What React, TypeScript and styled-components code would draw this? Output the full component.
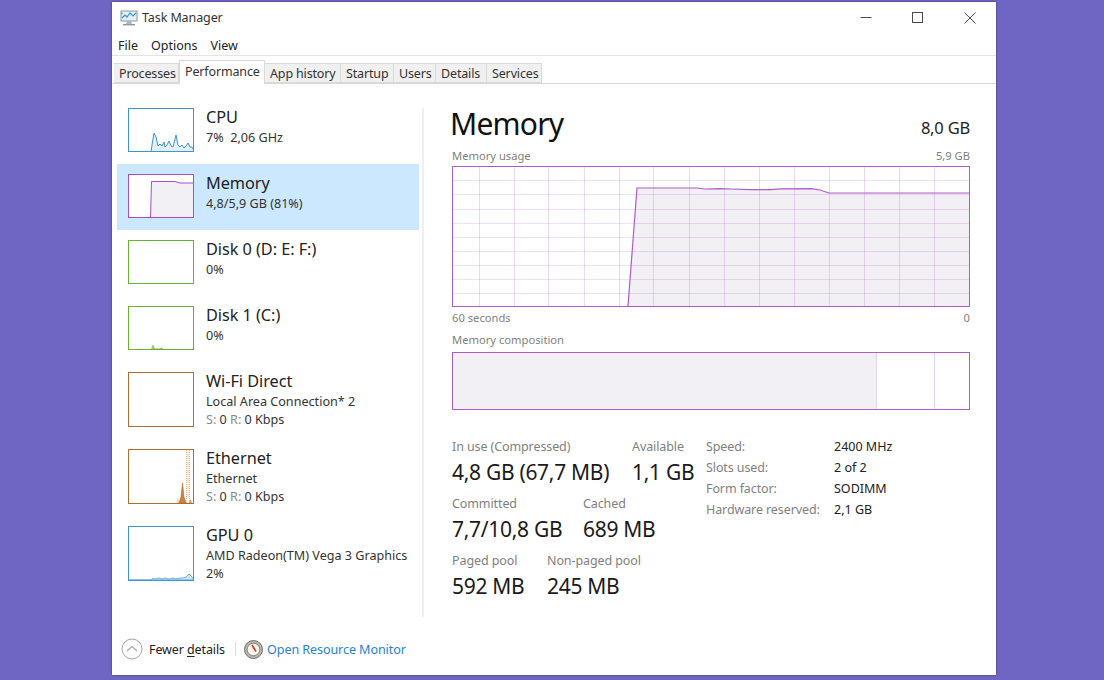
import React from "react";
import styled, { createGlobalStyle } from "styled-components";

const GlobalStyle = createGlobalStyle`
  html, body {
    margin: 0;
    height: 680px;
    overflow: hidden;
    background: #6f66c3;
    font-family: "Noto Sans", "Open Sans", sans-serif;
    color: #1a1a1a;
  }
`;

const TABS = [
  { label: "Processes", width: 65 },
  { label: "Performance", width: 86, active: true },
  { label: "App history", width: 76 },
  { label: "Startup", width: 53 },
  { label: "Users", width: 42 },
  { label: "Details", width: 51 },
  { label: "Services", width: 55 },
];

const BLUE = "#3f94d0";
const PURPLE = "#a84fc8";
const GREEN = "#6bb233";
const BROWN = "#b46c2e";

const CPU_LINE =
  "M22 43 L23 36 L25 24 L27 28 L29 37 L31 35 L33 37 L35 33 L36 38 L38 36 L40 32 L42 37 L44 38 L46 30 L47 26 L49 36 L51 38 L53 36 L55 39 L57 37 L59 34 L61 38 L63 38 L65 42";
const GPU_LINE =
  "M0 53 L22 53 L24 51 L26 52 L30 51 L33 52 L36 51 L40 52 L44 51 L47 52 L51 51 L54 51 L57 50 L60 47 L63 50 L65 53";

const GRID_X = [27, 62, 96, 132, 167, 201, 237, 272, 307, 342, 377, 412, 447, 482];
const GRID_Y = [14, 28, 43, 57, 71, 85, 99, 113, 127];
const USAGE_LINE =
  "M176 140 L185 22 L245 22 L253 23 L268 22.6 L279 23 L298 23.6 L319 23.6 L328 22.8 L359 22.6 L368 24 L377 27 L517 27";

const Thumb = ({ color, height, children }: { color: string; height: number; children?: React.ReactNode }) => (
  <ThumbBox $color={color} $height={height}>
    <svg width="64" height={height - 2} viewBox={`0 0 64 ${height - 2}`}>
      {children}
    </svg>
  </ThumbBox>
);

const DEVICES = [
  {
    name: "CPU",
    lines: ["7%  2,06 GHz"],
    thumb: (
      <Thumb color={BLUE} height={44}>
        <path d={`${CPU_LINE} L65 43 Z`} fill="#e5f1f9" stroke={BLUE} strokeWidth="1" />
      </Thumb>
    ),
  },
  {
    name: "Memory",
    selected: true,
    lines: ["4,8/5,9 GB (81%)"],
    thumb: (
      <Thumb color={PURPLE} height={44}>
        <path d="M21.5 43 L22.5 6.5 L46 6.5 L51 8 L65 8 L65 43 Z" fill="#f2f0f5" stroke={PURPLE} strokeWidth="1" />
      </Thumb>
    ),
  },
  { name: "Disk 0 (D: E: F:)", lines: ["0%"], thumb: <Thumb color={GREEN} height={44} /> },
  {
    name: "Disk 1 (C:)",
    lines: ["0%"],
    thumb: (
      <Thumb color={GREEN} height={44}>
        <path d="M22.5 42 L24 38 L25.5 42 L31 42 L32.5 41 L34 42 Z" fill="#a6d284" stroke={GREEN} strokeWidth="0.5" />
      </Thumb>
    ),
  },
  {
    name: "Wi-Fi Direct",
    tall: true,
    lines: ["Local Area Connection* 2"],
    rate: true,
    thumb: <Thumb color={BROWN} height={55} />,
  },
  {
    name: "Ethernet",
    tall: true,
    lines: ["Ethernet"],
    rate: true,
    thumb: (
      <Thumb color={BROWN} height={55}>
        <path d="M47 53 L49 47 L51 53 Z" fill="#f0d9c3" />
        <path d="M50 53 L52 47 L53.5 33 L55 47 L57 53 Z" fill="#c88443" stroke={BROWN} strokeWidth="0.6" />
        <path d="M58 1 L60 1 L60 48 L58 48 Z" fill="#f7eadd" />
        <path d="M57.5 53 L57.5 0 M60.5 0 L60.5 53" fill="none" stroke="#e3b184" strokeWidth="1" strokeDasharray="1 1" />
        <path d="M60 53 L61.5 49 L63 53 Z" fill="#d69b63" />
      </Thumb>
    ),
  },
  {
    name: "GPU 0",
    tall: true,
    lines: ["AMD Radeon(TM) Vega 3 Graphics", "2%"],
    thumb: (
      <Thumb color={BLUE} height={55}>
        <path d={`${GPU_LINE} Z`} fill="#cfe4f3" stroke={BLUE} strokeWidth="0.7" />
      </Thumb>
    ),
  },
];

const App = () => (
  <Desktop>
    <GlobalStyle />
    <Window>
      <TitleBar>
        <AppTitle>
          <svg width="18" height="17" viewBox="0 0 18 17">
            <rect x="1" y="2" width="16" height="10" fill="#e4eef4" stroke="#8a9aa4" />
            <path d="M2 9 L5 6 L7 8 L10 4 L13 7 L16 4" fill="none" stroke="#3d97c9" strokeWidth="1.2" />
            <path d="M1 5 L2 3 L3 5 Z" fill="#57a846" />
            <path d="M7 12 L11 12 L12 15 L6 15 Z" fill="#aeb9bf" />
            <rect x="3" y="15" width="12" height="1.4" fill="#8a9aa4" />
          </svg>
          <span>Task Manager</span>
        </AppTitle>
        <CaptionButtons>
          <CaptionButton>
            <svg width="12" height="12" viewBox="0 0 12 12">
              <path d="M0.5 5.5 L11.5 5.5" stroke="#4a4a4a" />
            </svg>
          </CaptionButton>
          <CaptionButton>
            <svg width="12" height="12" viewBox="0 0 12 12">
              <rect x="0.5" y="0.5" width="10" height="10" fill="none" stroke="#4a4a4a" />
            </svg>
          </CaptionButton>
          <CaptionButton>
            <svg width="12" height="12" viewBox="0 0 12 12">
              <path d="M0.5 0.5 L11.5 11.5 M11.5 0.5 L0.5 11.5" stroke="#4a4a4a" />
            </svg>
          </CaptionButton>
        </CaptionButtons>
      </TitleBar>
      <MenuBar>
        <MenuItem>File</MenuItem>
        <MenuItem>Options</MenuItem>
        <MenuItem>View</MenuItem>
      </MenuBar>
      <TabStrip>
        {TABS.map((tab) => (
          <Tab key={tab.label} $width={tab.width} $active={tab.active}>
            {tab.label}
          </Tab>
        ))}
      </TabStrip>
      <Content>
        <Sidebar>
          {DEVICES.map((device) => (
            <Device key={device.name} $selected={device.selected} $tall={device.tall}>
              {device.thumb}
              <DeviceText>
                <DeviceName>{device.name}</DeviceName>
                <DeviceLines>
                  {device.lines.map((line) => (
                    <DeviceLine key={line}>{line}</DeviceLine>
                  ))}
                  {device.rate && (
                    <DeviceLine>
                      <Muted>S:</Muted> 0 <Muted>R:</Muted> 0 Kbps
                    </DeviceLine>
                  )}
                </DeviceLines>
              </DeviceText>
            </Device>
          ))}
        </Sidebar>
        <Divider />
        <Panel>
          <PanelHeader>
            <PanelTitle>Memory</PanelTitle>
            <PanelTotal>8,0 GB</PanelTotal>
          </PanelHeader>
          <CaptionRow>
            <span>Memory usage</span>
            <span>5,9 GB</span>
          </CaptionRow>
          <UsageGraph>
            <svg width="516" height="139" viewBox="1 1 516 139">
              <path d="M176 140 L185 22 L245 22 L253 23 L268 22.6 L279 23 L298 23.6 L319 23.6 L328 22.8 L359 22.6 L368 24 L377 27 L517 27 L517 140 Z" fill="#f2f0f5" />
              {GRID_X.map((x) => (
                <path key={x} d={`M${x}.5 1 L${x}.5 140`} stroke="#a84fc8" strokeOpacity="0.22" />
              ))}
              {GRID_Y.map((y) => (
                <path key={y} d={`M1 ${y}.5 L517 ${y}.5`} stroke="#a84fc8" strokeOpacity="0.18" />
              ))}
              <path d={USAGE_LINE} fill="none" stroke="#ad5ccb" strokeWidth="1.2" />
            </svg>
          </UsageGraph>
          <TimeRow>
            <span>60 seconds</span>
            <span>0</span>
          </TimeRow>
          <CompositionCaption>Memory composition</CompositionCaption>
          <Composition>
            <CompositionPart $width={424} $used />
            <CompositionPart $width={58} />
            <CompositionPart $width={34} $last />
          </Composition>
          <Stats>
            <StatRows>
              <StatRow>
                <Stat $width={180}>
                  <StatLabel>In use (Compressed)</StatLabel>
                  <StatValue>4,8 GB (67,7 MB)</StatValue>
                </Stat>
                <Stat>
                  <StatLabel>Available</StatLabel>
                  <StatValue>1,1 GB</StatValue>
                </Stat>
              </StatRow>
              <StatRow>
                <Stat $width={131}>
                  <StatLabel>Committed</StatLabel>
                  <StatValue>7,7/10,8 GB</StatValue>
                </Stat>
                <Stat>
                  <StatLabel>Cached</StatLabel>
                  <StatValue>689 MB</StatValue>
                </Stat>
              </StatRow>
              <StatRow>
                <Stat $width={95}>
                  <StatLabel>Paged pool</StatLabel>
                  <StatValue>592 MB</StatValue>
                </Stat>
                <Stat>
                  <StatLabel>Non-paged pool</StatLabel>
                  <StatValue>245 MB</StatValue>
                </Stat>
              </StatRow>
            </StatRows>
            <SpecTable>
              <SpecLabel>Speed:</SpecLabel>
              <SpecValue>2400 MHz</SpecValue>
              <SpecLabel>Slots used:</SpecLabel>
              <SpecValue>2 of 2</SpecValue>
              <SpecLabel>Form factor:</SpecLabel>
              <SpecValue>SODIMM</SpecValue>
              <SpecLabel>Hardware reserved:</SpecLabel>
              <SpecValue>2,1 GB</SpecValue>
            </SpecTable>
          </Stats>
        </Panel>
      </Content>
      <Footer>
        <svg width="22" height="22" viewBox="0 0 22 22">
          <circle cx="11" cy="11" r="10" fill="#fff" stroke="#a6a6a6" />
          <path d="M6 13 L11 8.5 L16 13" fill="none" stroke="#a6a6a6" strokeWidth="1.3" />
        </svg>
        <FewerDetails>
          Fewer <u>d</u>etails
        </FewerDetails>
        <FooterSeparator />
        <svg width="19" height="19" viewBox="0 0 19 19">
          <circle cx="9.5" cy="9.5" r="9" fill="#b9b4ab" stroke="#77726a" />
          <circle cx="9.5" cy="9.5" r="6.3" fill="#f8f5ee" stroke="#8d877c" />
          <path d="M8 5 L12 11.5" stroke="#d23a2a" strokeWidth="1.6" />
          <circle cx="9.5" cy="8" r="0.9" fill="#6b665e" />
        </svg>
        <ResourceLink>Open Resource Monitor</ResourceLink>
      </Footer>
    </Window>
  </Desktop>
);

export default App;

const Desktop = styled.div`
  padding: 2px 0 0 112px;
`;

const Window = styled.div`
  width: 884px;
  height: 673px;
  box-sizing: border-box;
  background: #fff;
  box-shadow: 0 0 2px rgba(40, 30, 90, 0.7);
  display: flex;
  flex-direction: column;
`;

const TitleBar = styled.div`
  height: 30px;
  display: flex;
  align-items: center;
  justify-content: space-between;
`;

const AppTitle = styled.div`
  display: flex;
  align-items: center;
  gap: 4px;
  padding-left: 8px;
  font-size: 12.5px;
  letter-spacing: -0.1px;
  color: #333;
`;

const CaptionButtons = styled.div`
  display: flex;
`;

const CaptionButton = styled.div`
  width: 52px;
  height: 30px;
  box-sizing: border-box;
  padding-top: 2px;
  display: flex;
  align-items: center;
  justify-content: center;
`;

const MenuBar = styled.div`
  height: 20px;
  display: flex;
  align-items: center;
  gap: 13px;
  padding: 3px 0 0 6px;
  border-bottom: 1px solid #e4e4e4;
  box-sizing: content-box;
`;

const MenuItem = styled.span`
  font-size: 12.5px;
  color: #222;
`;

const TabStrip = styled.div`
  height: 27px;
  display: flex;
  align-items: flex-end;
  padding-left: 2px;
  border-bottom: 1px solid #d9d9d9;
`;

const Tab = styled.div<{ $width: number; $active?: boolean }>`
  width: ${(p) => p.$width}px;
  height: ${(p) => (p.$active ? 24 : 20)}px;
  box-sizing: border-box;
  margin-bottom: ${(p) => (p.$active ? -1 : 0)}px;
  padding: 0 0 ${(p) => (p.$active ? 2 : 0)}px 5px;
  display: flex;
  align-items: center;
  font-size: 12.5px;
  letter-spacing: -0.15px;
  white-space: nowrap;
  color: #333;
  background: ${(p) => (p.$active ? "#fff" : "#f0f0f0")};
  border: 1px solid #d9d9d9;
  border-left-width: ${(p) => (p.$active ? 1 : 0)}px;
  border-bottom-width: ${(p) => (p.$active ? 0 : 1)}px;
  position: relative;
`;

const Content = styled.div`
  flex: 1;
  display: flex;
  padding: 14px 0 0 5px;
  min-height: 0;
`;

const Sidebar = styled.div`
  width: 302px;
  flex-shrink: 0;
`;

const Device = styled.div<{ $selected?: boolean; $tall?: boolean }>`
  height: ${(p) => (p.$tall ? 77 : 66)}px;
  box-sizing: border-box;
  padding: 10px 0 0 11px;
  display: flex;
  gap: 12px;
  background: ${(p) => (p.$selected ? "#cce8ff" : "transparent")};
`;

const ThumbBox = styled.div<{ $color: string; $height: number }>`
  width: 66px;
  height: ${(p) => p.$height}px;
  box-sizing: border-box;
  border: 1px solid ${(p) => p.$color};
  background: #fff;
  flex-shrink: 0;
  overflow: hidden;

  svg {
    display: block;
  }
`;

const DeviceText = styled.div`
  display: flex;
  flex-direction: column;
  gap: 3px;
  min-width: 0;
`;

const DeviceName = styled.div`
  font-size: 16.3px;
  line-height: 18px;
  letter-spacing: -0.05px;
  color: #222;
  white-space: nowrap;
`;

const DeviceLines = styled.div`
  font-size: 12.6px;
  line-height: 18px;
  color: #333;
`;

const DeviceLine = styled.div`
  white-space: pre;
`;

const Muted = styled.span`
  color: #8a8a8a;
`;

const Divider = styled.div`
  width: 2px;
  height: 509px;
  margin: 10px 0 0 3px;
  background: #efefef;
  flex-shrink: 0;
`;

const Panel = styled.div`
  width: 518px;
  margin-left: 28px;
  padding-top: 6px;
`;

const PanelHeader = styled.div`
  height: 44px;
  display: flex;
  justify-content: space-between;
`;

const PanelTitle = styled.div`
  font-size: 30px;
  line-height: 40px;
  letter-spacing: -0.8px;
  margin-left: -2px;
  color: #111;
`;

const PanelTotal = styled.div`
  font-size: 16.5px;
  line-height: 24px;
  margin-top: 12px;
  letter-spacing: -0.2px;
  color: #222;
`;

const CaptionRow = styled.div`
  display: flex;
  justify-content: space-between;
  font-size: 11.2px;
  line-height: 16px;
  color: #7f7f7f;
`;

const UsageGraph = styled.div`
  height: 141px;
  margin-top: 2px;
  box-sizing: border-box;
  border: 1px solid #ad5ccb;

  svg {
    display: block;
  }
`;

const TimeRow = styled(CaptionRow)`
  margin-top: 3px;
`;

const CompositionCaption = styled(CaptionRow)`
  margin-top: 6px;
`;

const Composition = styled.div`
  height: 58px;
  margin-top: 4px;
  box-sizing: border-box;
  border: 1px solid #ad5ccb;
  display: flex;
`;

const CompositionPart = styled.div<{ $width: number; $used?: boolean; $last?: boolean }>`
  width: ${(p) => p.$width}px;
  flex-grow: ${(p) => (p.$last ? 1 : 0)};
  box-sizing: border-box;
  background: ${(p) => (p.$used ? "#f2f0f5" : "#fff")};
  border-right: ${(p) => (p.$last ? "0" : "1px solid #e6d2ee")};
`;

const Stats = styled.div`
  margin-top: 28px;
  display: grid;
  grid-template-columns: 254px 1fr;
`;

const StatRows = styled.div`
  display: flex;
  flex-direction: column;
  gap: 10px;
`;

const StatRow = styled.div`
  display: flex;
`;

const Stat = styled.div<{ $width?: number }>`
  width: ${(p) => (p.$width ? `${p.$width}px` : "auto")};
  white-space: nowrap;
`;

const StatLabel = styled.div`
  font-size: 12.5px;
  line-height: 18px;
  letter-spacing: -0.1px;
  color: #7f7f7f;
`;

const StatValue = styled.div`
  margin-top: 3px;
  font-size: 21px;
  line-height: 26px;
  letter-spacing: -0.3px;
  color: #1a1a1a;
`;

const SpecTable = styled.div`
  display: grid;
  grid-template-columns: 128px 1fr;
  grid-auto-rows: 18px;
  row-gap: 3px;
  font-size: 12.5px;
  line-height: 18px;
  align-content: start;
`;

const SpecLabel = styled.div`
  color: #7f7f7f;
  letter-spacing: -0.1px;
  white-space: nowrap;
`;

const SpecValue = styled.div`
  color: #222;
`;

const Footer = styled.div`
  height: 43px;
  margin-top: auto;
  flex-shrink: 0;
  display: flex;
  align-items: center;
  padding: 0 0 9px 9px;
  box-sizing: border-box;
`;

const FewerDetails = styled.span`
  margin-left: 6px;
  width: 86px;
  font-size: 12.5px;
  letter-spacing: -0.1px;
  color: #222;
  white-space: nowrap;

  u {
    text-underline-offset: 2px;
  }
`;

const FooterSeparator = styled.div`
  width: 1px;
  height: 14px;
  background: #dcdcdc;
  margin: 0 8px 0 0;
`;

const ResourceLink = styled.span`
  margin-left: 4px;
  font-size: 12.6px;
  letter-spacing: -0.1px;
  color: #2a7fd4;
  white-space: nowrap;
`;
